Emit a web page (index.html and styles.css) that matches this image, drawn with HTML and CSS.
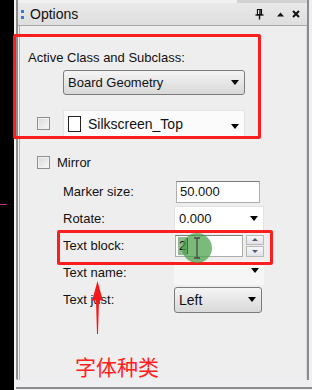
FILE: index.html
```html
<!DOCTYPE html>
<html>
<head>
<meta charset="utf-8">
<title>Options</title>
<link rel="stylesheet" href="styles.css">
</head>
<body>
<div class="screen">
  <div class="black"><div class="pink"></div></div>
  <div class="gap"></div>
  <div class="rightcol">
    <div class="dock">
      <div class="topstrip"><div class="topseg"></div></div>
      <div class="titlebar">
        <div class="grip"><span></span><span></span></div>
        <div class="title">Options</div>
        <div class="tools">
          <svg class="tool-pin" width="9" height="11" viewBox="0 0 9 11"><path d="M2.5 0.5h4v5h-4z" fill="#fff" stroke="#111" stroke-width="1.2"/><path d="M5 1v4.5" stroke="#111" stroke-width="1.5"/><path d="M0.5 6h8" stroke="#111" stroke-width="1.4"/><path d="M4.5 6v4.5" stroke="#111" stroke-width="1.4"/></svg>
          <svg class="tool-up" width="7" height="5" viewBox="0 0 7 5"><path d="M0 4.5L3.5 0.5L7 4.5z" fill="#111"/></svg>
          <svg class="tool-close" width="8" height="8" viewBox="0 0 8 8"><path d="M1 1L7 7M7 1L1 7" stroke="#111" stroke-width="2"/></svg>
        </div>
      </div>
      <div class="panel">
        <div class="section-label">Active Class and Subclass:</div>
        <div class="dropdown class-dd"><span>Board Geometry</span><i class="caret"></i></div>
        <div class="sub-row">
          <span class="check"></span>
          <div class="sub-combo"><span class="swatch"></span><span class="sub-text">Silkscreen_Top</span><i class="caret caret-low"></i></div>
        </div>
        <div class="mirror-row"><span class="check"></span><span class="mirror-text">Mirror</span></div>
        <div class="fields">
          <div class="field-label">Marker size:</div>
          <div class="field-ctl"><div class="input marker">50.000</div></div>
          <div class="field-label">Rotate:</div>
          <div class="field-ctl"><div class="combo-white"><span>0.000</span><i class="caret"></i></div></div>
          <div class="field-label">Text block:</div>
          <div class="field-ctl spin-wrap">
            <div class="input block"><span class="sel">2</span><span class="caretline"></span></div>
            <div class="spin"><span class="spin-btn"><i class="tri-up"></i></span><span class="spin-btn"><i class="tri-down"></i></span></div>
          </div>
          <div class="field-label">Text name:</div>
          <div class="field-ctl"><div class="combo-flat"><i class="caret"></i></div></div>
          <div class="field-label">Text just:</div>
          <div class="field-ctl"><div class="dropdown just-dd"><span>Left</span><i class="caret"></i></div></div>
        </div>
        <div class="note">字体种类</div>
      </div>
    </div>
    <div class="next-panel"></div>
  </div>
</div>
<div class="red-box box1"></div>
<div class="red-box box2"></div>
<div class="click-dot"></div>
<svg class="ibeam" width="8" height="22" viewBox="0 0 8 22"><path d="M1 1h6M4 1v20M1 21h6" stroke="#4a4a4a" stroke-width="1.3" fill="none"/></svg>
<svg class="red-arrow" width="20" height="58" viewBox="0 0 20 58"><path d="M9.5 2L15 22L11 21L10 55L9 55L8 21L4 22Z" fill="#f41818"/></svg>
</body>
</html>
```
FILE: styles.css
```css
* { box-sizing: border-box; margin: 0; padding: 0; }
html, body { width: 312px; height: 390px; overflow: hidden; }
body {
  background: #efeef0;
  font-family: "Liberation Sans", Arial, sans-serif;
  font-size: 13px;
  color: #111;
  position: relative;
}
.screen { display: flex; height: 390px; }
.black { width: 14px; flex: none; background: #000; }
.pink { margin-top: 204px; width: 7px; height: 1px; background: #b4308e; }
.gap { width: 2px; flex: none; background: #f3f3f3; }
.rightcol { width: 296px; flex: none; display: flex; flex-direction: column; }
.dock {
  height: 380px;
  width: 293px;
  border-left: 2px solid #8c8c8c;
  border-right: 2px solid #8c8c8c;
  border-bottom-left-radius: 2px;
  display: flex;
  flex-direction: column;
  background: #efeeef;
}
.topstrip { height: 3px; display: flex; background: #f1f1f1; }
.topseg { margin-left: auto; width: 70px; background: #d2d2d2; }
.titlebar {
  height: 23px;
  display: flex;
  align-items: center;
  background: linear-gradient(#e9e9e9, #dedede);
  padding: 0 7px 0 3px;
  border-bottom: 1px solid #a8a8a8;
}
.grip { display: flex; flex-direction: column; gap: 3px; }
.grip span { width: 3px; height: 3px; background: #3a7ad4; }
.title { margin-left: 6px; font-size: 14px; line-height: 16px; }
.tools { margin-left: auto; display: flex; align-items: center; }
.tool-up { margin-left: 13px; }
.tool-close { margin-left: 8px; }
.panel {
  flex: 1;
  margin-left: 1px;
  border-left: 1px solid #b5b5b5;
  border-right: 1px solid #dadada;
  padding-top: 24px;
}
.section-label { margin-left: 8px; line-height: 16px; }
.dropdown {
  display: flex;
  align-items: center;
  justify-content: space-between;
  border: 1px solid #7b7b7b;
  border-radius: 3px;
  background: linear-gradient(#f5f5f5, #e6e6e6 50%, #d9d9d9);
  padding: 0 5px 0 4px;
}
.class-dd { margin: 4px 0 0 43px; width: 182px; height: 25px; }
.caret {
  display: block;
  width: 0;
  height: 0;
  border-left: 4.5px solid transparent;
  border-right: 4.5px solid transparent;
  border-top: 5px solid #000;
}
.caret-low { margin-top: 5px; }
.sub-row { display: flex; align-items: center; height: 27px; margin-top: 15px; }
.check {
  width: 13px;
  height: 13px;
  flex: none;
  border: 1px solid #8e8f8f;
  background: linear-gradient(135deg, #d8d8d8, #f8f8f8);
  box-shadow: inset 0 0 0 1px #f2f2f2;
}
.sub-row .check { margin-left: 17px; }
.sub-combo {
  margin-left: 13px;
  width: 182px;
  height: 27px;
  background: #fbfbfb;
  border: 1px solid #e4e4e4;
  display: flex;
  align-items: center;
  padding: 0 5px 0 4px;
}
.swatch { width: 13px; height: 16px; border: 1.5px solid #222; background: #fff; flex: none; }
.sub-text { margin-left: 7px; font-size: 14px; }
.sub-combo .caret { margin-left: auto; }
.mirror-row { display: flex; align-items: center; height: 16px; margin-top: 17px; padding-left: 17px; }
.mirror-text { margin-left: 7px; }
.fields {
  display: grid;
  grid-template-columns: 111px 90px;
  grid-auto-rows: 27px;
  align-items: center;
  margin: 8px 0 0 43px;
}
.field-label { line-height: 16px; }
.input {
  height: 22px;
  background: #fff;
  border: 1px solid #adadad;
  border-top-color: #7a7a7a;
  padding-left: 3px;
  line-height: 20px;
}
.marker { margin-left: 2px; width: 84px; }
.combo-white {
  height: 25px;
  background: #fff;
  border: 1px solid #e2e2e2;
  display: flex;
  align-items: center;
  justify-content: space-between;
  padding: 0 5px 0 4px;
}
.spin-wrap { display: flex; align-items: center; }
.block { margin-left: 1px; width: 68px; display: flex; align-items: center; padding-left: 2px; }
.sel { background: rgba(60, 130, 60, 0.55); color: #111; padding: 0 1px; line-height: 18px; }
.caretline { width: 1px; height: 16px; background: #111; }
.spin { margin-left: 3px; width: 18px; height: 22px; display: flex; flex-direction: column; gap: 1px; }
.spin-btn {
  flex: 1;
  border: 1px solid #b9b9b9;
  background: linear-gradient(#f7f7f7, #e3e3e3);
  display: flex;
  align-items: center;
  justify-content: center;
}
.tri-up, .tri-down { display: block; width: 0; height: 0; border-left: 3px solid transparent; border-right: 3px solid transparent; }
.tri-up { border-bottom: 3px solid #4a5a7c; }
.tri-down { border-top: 3px solid #4a5a7c; }
.combo-flat {
  height: 24px;
  background: #f6f6f6;
  display: flex;
  align-items: flex-start;
  justify-content: flex-end;
  padding: 7px 5px 0 0;
}
.just-dd { width: 88px; height: 26px; font-size: 14px; }
.note {
  margin: 43px 0 0 55px;
  font-family: "Noto Sans CJK SC", sans-serif;
  font-size: 21px;
  line-height: 21px;
  color: #ff2020;
}
.next-panel { margin-top: 7px; height: 3px; border-top: 2px solid #8c8c8c; }
.red-box { position: absolute; border: 3px solid #fa1e1e; border-radius: 2px; }
.box1 { left: 13px; top: 34px; width: 248px; height: 105px; }
.box2 { left: 57px; top: 230px; width: 216px; height: 35px; }
.click-dot {
  position: absolute;
  left: 182px;
  top: 233px;
  width: 30px;
  height: 30px;
  border-radius: 50%;
  background: rgba(70, 160, 70, 0.72);
}
.ibeam { position: absolute; left: 193px; top: 237px; }
.red-arrow { position: absolute; left: 88px; top: 279px; }
```
